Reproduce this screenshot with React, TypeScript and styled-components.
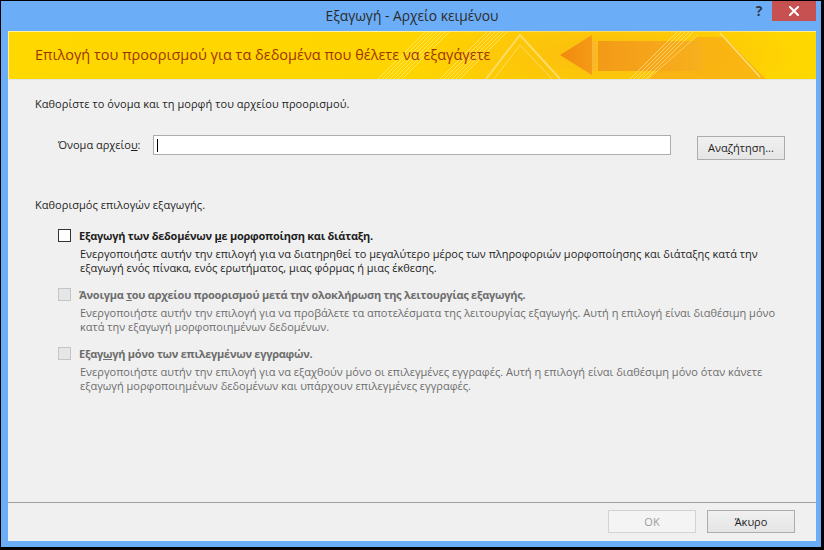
import React from 'react';
import styled, { createGlobalStyle } from 'styled-components';

const Global = createGlobalStyle`
  html, body { margin: 0; padding: 0; background: #ffffff; }
  body { font-family: "Open Sans", "Noto Sans", sans-serif; }
  * { box-sizing: border-box; }
`;

const Window = styled.div`
  width: 824px;
  height: 550px;
  background: #6badf6;
  border-style: solid;
  border-color: #000;
  border-width: 1px 3px 3px 1px;
  padding: 0 5px 6px 7px;
  display: flex;
  flex-direction: column;
`;

const TitleBar = styled.div`
  height: 30px;
  display: grid;
  grid-template-columns: 1fr auto 1fr;
  align-items: start;
`;

const Title = styled.div`
  grid-column: 2;
  font-size: 13.8px;
  line-height: 29px;
  color: #2b2b2b;
  white-space: nowrap;
`;

const Controls = styled.div`
  grid-column: 3;
  justify-self: end;
  display: flex;
  align-items: flex-start;
`;

const HelpButton = styled.div`
  width: 26px;
  height: 20px;
  font-size: 14px;
  font-weight: 700;
  line-height: 20px;
  text-align: center;
  color: #2e3a48;
`;

const CloseButton = styled.div`
  width: 44px;
  height: 20px;
  background: #c75050;
  display: flex;
  align-items: center;
  justify-content: center;
`;

const Client = styled.div`
  flex: 1;
  background: #f0f0f0;
  display: flex;
  flex-direction: column;
`;

const Banner = styled.div`
  position: relative;
  height: 49px;
  flex: none;
  background: linear-gradient(90deg, #ffd800 0%, #ffd400 60%, #ffd800 100%);
  box-shadow: inset 1px 1px 0 #fff2a0;
  border-bottom: 1px solid #e3e3e3;
  overflow: hidden;
`;

const BannerArt = styled.svg`
  position: absolute;
  left: 0;
  top: 0;
`;

const BannerText = styled.div`
  position: relative;
  padding-left: 27px;
  line-height: 48px;
  font-size: 14.5px;
  color: #a03400;
  white-space: nowrap;
`;

const Content = styled.div`
  flex: 1;
  padding: 16px 27px 0;
  display: flex;
  flex-direction: column;
`;

const Text = styled.div<{ $muted?: boolean; $bold?: boolean }>`
  font-size: 11px;
  line-height: 16px;
  color: ${(p) => (p.$muted ? '#6d6d6d' : '#1e1e1e')};
  font-weight: ${(p) => (p.$bold ? 700 : 400)};
  letter-spacing: ${(p) => (p.$bold ? '-0.25px' : '0.05px')};
  white-space: nowrap;
`;

const FileRow = styled.div`
  margin-top: 23px;
  padding-left: 23px;
  display: flex;
  align-items: flex-start;
`;

const FieldLabel = styled.div`
  width: 95px;
  height: 20px;
  font-size: 11px;
  line-height: 20px;
  color: #1e1e1e;
  white-space: nowrap;
`;

const Input = styled.div`
  width: 518px;
  height: 20px;
  background: #fff;
  border: 1px solid #abadb3;
  padding: 3px 0 0 3px;
`;

const Caret = styled.div`
  width: 1px;
  height: 13px;
  background: #000;
`;

const Button = styled.div<{ $disabled?: boolean }>`
  width: 88px;
  height: 23px;
  border: 1px solid ${(p) => (p.$disabled ? '#d3d3d3' : '#adadad')};
  background: ${(p) =>
    p.$disabled ? '#f4f4f4' : 'linear-gradient(180deg, #f0f0f0 0%, #e5e5e5 100%)'};
  color: ${(p) => (p.$disabled ? '#9c9c9c' : '#1e1e1e')};
  font-size: 11px;
  line-height: 21px;
  text-align: center;
  white-space: nowrap;
`;

const BrowseButton = styled(Button)`
  margin-left: 26px;
  margin-top: 1px;
  height: 24px;
  line-height: 22px;
`;

const SectionText = styled(Text)`
  margin-top: 37px;
`;

const Options = styled.div`
  margin-top: 15px;
  padding-left: 23px;
  display: flex;
  flex-direction: column;
  gap: 12px;
`;

const Option = styled.div`
  display: grid;
  grid-template-columns: 13px 1fr;
  column-gap: 8px;
`;

const Box = styled.div<{ $disabled?: boolean }>`
  width: 13px;
  height: 13px;
  margin-top: 1px;
  background: ${(p) => (p.$disabled ? '#e6e6e6' : '#ffffff')};
  border: 1px solid ${(p) => (p.$disabled ? '#c5c5c5' : '#333333')};
`;

const Desc = styled.div<{ $muted?: boolean }>`
  grid-column: 2;
  margin-top: 3px;
  padding-left: 1px;
  font-size: 11px;
  line-height: 14px;
  color: ${(p) => (p.$muted ? '#6d6d6d' : '#1e1e1e')};
  white-space: nowrap;
`;

const Footer = styled.div`
  flex: none;
  height: 39px;
  border-top: 1px solid #a0a0a0;
  padding: 7px 21px 0 0;
  display: flex;
  justify-content: flex-end;
  gap: 11px;
`;

const Art = () => (
  <BannerArt width="808" height="48" viewBox="0 0 808 48">
    <defs>
      <radialGradient id="glow" cx="0.5" cy="0.5" r="0.5">
        <stop offset="0" stopColor="#f8a81c" stopOpacity="0.6" />
        <stop offset="0.6" stopColor="#fbbb10" stopOpacity="0.35" />
        <stop offset="1" stopColor="#ffd400" stopOpacity="0" />
      </radialGradient>
      <linearGradient id="arrow" x1="0" x2="1" y1="0" y2="0">
        <stop offset="0" stopColor="#f08a10" />
        <stop offset="1" stopColor="#f49a16" />
      </linearGradient>
      <linearGradient id="shaft" x1="0" x2="1" y1="0" y2="0">
        <stop offset="0" stopColor="#f39a18" />
        <stop offset="1" stopColor="#f8b01c" />
      </linearGradient>
    </defs>
    <ellipse cx="600" cy="24" rx="230" ry="60" fill="url(#glow)" />
    <g stroke="#fff4a8" strokeOpacity="0.55" strokeWidth="1">
      {[0, 4, 8, 12, 16, 20, 24].map((d) => (
        <line key={'a' + d} x1={370 + d} y1={48} x2={418 + d} y2={0} />
      ))}
      {[0, 4, 8, 12, 16, 20].map((d) => (
        <line key={'b' + d} x1={432 + d} y1={48} x2={480 + d} y2={0} />
      ))}
    </g>
    <polyline points="478,48 512,4 552,48" fill="none" stroke="#ffe27a" strokeWidth="2" strokeOpacity="0.8" />
    <polyline points="486,48 512,14 544,48" fill="none" stroke="#ffe9a0" strokeWidth="1" strokeOpacity="0.6" />
    <polygon points="640,48 688,6 716,6 758,48" fill="#f6a51a" fillOpacity="0.6" />
    <polygon points="552,24 584,4 584,44" fill="url(#arrow)" />
    <rect x="584" y="10" width="4" height="30" fill="#fab62c" />
    <rect x="590" y="10" width="104" height="30" fill="url(#shaft)" />
    <g stroke="#fff0a0" strokeOpacity="0.6" strokeWidth="1">
      {[0, 4, 8, 12, 16].map((d) => (
        <line key={'c' + d} x1={622 + d} y1={48} x2={670 + d} y2={0} />
      ))}
    </g>
    <line x1="712" y1="2" x2="752" y2="46" stroke="#ffe890" strokeWidth="1.5" strokeOpacity="0.8" />
    <line x1="640" y1="48" x2="690" y2="4" stroke="#ffe890" strokeWidth="1" strokeOpacity="0.6" />
  </BannerArt>
);

const CloseIcon = () => (
  <svg width="10" height="10" viewBox="0 0 10 10">
    <path d="M1 1 L9 9 M9 1 L1 9" stroke="#fff" strokeWidth="2" strokeLinecap="square" />
  </svg>
);

type OptionData = {
  label: React.ReactNode;
  lines: string[];
  disabled?: boolean;
};

const options: OptionData[] = [
  {
    label: (
      <>
        Εξαγωγή των δεδομένων <u>μ</u>ε μορφοποίηση και διάταξη.
      </>
    ),
    lines: [
      'Ενεργοποιήστε αυτήν την επιλογή για να διατηρηθεί το μεγαλύτερο μέρος των πληροφοριών μορφοποίησης και διάταξης κατά την',
      'εξαγωγή ενός πίνακα, ενός ερωτήματος, μιας φόρμας ή μιας έκθεσης.',
    ],
  },
  {
    label: (
      <>
        Άνοιγμα <u>τ</u>ου αρχείου προορισμού μετά την ολοκλήρωση της λειτουργίας εξαγωγής.
      </>
    ),
    lines: [
      'Ενεργοποιήστε αυτήν την επιλογή για να προβάλετε τα αποτελέσματα της λειτουργίας εξαγωγής. Αυτή η επιλογή είναι διαθέσιμη μόνο',
      'κατά την εξαγωγή μορφοποιημένων δεδομένων.',
    ],
    disabled: true,
  },
  {
    label: (
      <>
        Εξαγ<u>ω</u>γή μόνο των επιλεγμένων εγγραφών.
      </>
    ),
    lines: [
      'Ενεργοποιήστε αυτήν την επιλογή για να εξαχθούν μόνο οι επιλεγμένες εγγραφές. Αυτή η επιλογή είναι διαθέσιμη μόνο όταν κάνετε',
      'εξαγωγή μορφοποιημένων δεδομένων και υπάρχουν επιλεγμένες εγγραφές.',
    ],
    disabled: true,
  },
];

export default function App() {
  return (
    <>
      <Global />
      <Window>
        <TitleBar>
          <Title>Εξαγωγή - Αρχείο κειμένου</Title>
          <Controls>
            <HelpButton>?</HelpButton>
            <CloseButton>
              <CloseIcon />
            </CloseButton>
          </Controls>
        </TitleBar>
        <Client>
          <Banner>
            <Art />
            <BannerText>Επιλογή του προορισμού για τα δεδομένα που θέλετε να εξαγάγετε</BannerText>
          </Banner>
          <Content>
            <Text>Καθορίστε το όνομα και τη μορφή του αρχείου προορισμού.</Text>
            <FileRow>
              <FieldLabel>
                Όνομα αρχείο<u>υ</u>:
              </FieldLabel>
              <Input>
                <Caret />
              </Input>
              <BrowseButton>
                Ανα<u>ζ</u>ήτηση...
              </BrowseButton>
            </FileRow>
            <SectionText>Καθορισμός επιλογών εξαγωγής.</SectionText>
            <Options>
              {options.map((o, i) => (
                <Option key={i}>
                  <Box $disabled={o.disabled} />
                  <Text $bold $muted={o.disabled}>
                    {o.label}
                  </Text>
                  <Desc $muted={o.disabled}>
                    {o.lines.map((l, j) => (
                      <div key={j}>{l}</div>
                    ))}
                  </Desc>
                </Option>
              ))}
            </Options>
          </Content>
          <Footer>
            <Button $disabled>OK</Button>
            <Button>Άκυρο</Button>
          </Footer>
        </Client>
      </Window>
    </>
  );
}
